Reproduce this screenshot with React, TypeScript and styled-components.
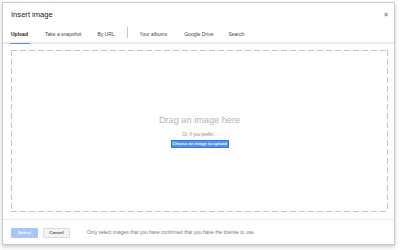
import React from "react";
import styled, { createGlobalStyle } from "styled-components";

const Global = createGlobalStyle`
  html, body { margin: 0; padding: 0; background: #fff; }
  body { font-family: "Liberation Sans", Arial, sans-serif; }
  #root { padding: 2px 5px 5px 2px; }
`;

const Dialog = styled.div`
  width: 391px;
  height: 241px;
  border: 1px solid #c8c8c8;
  box-shadow: 0 2px 4px rgba(0, 0, 0, 0.2);
  background: #fff;
  display: flex;
  flex-direction: column;
  box-sizing: content-box;
`;

const Header = styled.div`
  height: 21px;
  display: flex;
  align-items: center;
  justify-content: space-between;
  padding: 0 6px 0 8px;
`;

const Title = styled.div`
  font-size: 7.6px;
  color: #222;
  padding-top: 2px;
`;

const Close = styled.div`
  font-size: 7px;
  color: #777;
  font-weight: bold;
  padding-top: 1px;
`;

const Tabs = styled.div`
  height: 18px;
  display: flex;
  align-items: stretch;
  border-bottom: 2px solid #ececec;
  padding-left: 8px;
`;

const Tab = styled.div<{ $active?: boolean; $gap: number }>`
  font-size: 5px;
  color: ${(p) => (p.$active ? "#222" : "#444")};
  font-weight: ${(p) => (p.$active ? "bold" : "normal")};
  display: flex;
  align-items: center;
  padding: 1px 0 0 0;
  margin-right: ${(p) => p.$gap}px;
  border-bottom: 1px solid ${(p) => (p.$active ? "#4d90fe" : "transparent")};
  margin-bottom: -2px;
  box-sizing: border-box;
  ${(p) => (p.$active ? "padding-left: 1px; padding-right: 2px; margin-left: -1px;" : "")}
`;

const Separator = styled.div`
  width: 1px;
  background: #c6c6c6;
  margin: 3px 12px 4px 0;
`;

const Body = styled.div`
  flex: 1;
  padding: 6px 6px 7px 8px;
  display: flex;
`;

const Drop = styled.div`
  flex: 1;
  display: flex;
  flex-direction: column;
  align-items: center;
  justify-content: center;
  padding-bottom: 0;
  background-image: linear-gradient(to right, #c4c4c4 62%, transparent 62%),
    linear-gradient(to right, #c4c4c4 62%, transparent 62%),
    linear-gradient(to bottom, #c4c4c4 62%, transparent 62%),
    linear-gradient(to bottom, #c4c4c4 62%, transparent 62%);
  background-size: 9px 1px, 9px 1px, 1px 9px, 1px 9px;
  background-position: left top, left bottom, left top, right top;
  background-repeat: repeat-x, repeat-x, repeat-y, repeat-y;
`;

const DragText = styled.div`
  font-size: 9.2px;
  color: #b5b5b5;
  margin-bottom: 7px;
`;

const OrText = styled.div`
  font-size: 4.5px;
  color: #888;
  margin-bottom: 3px;
`;

const PrimaryButton = styled.div`
  width: 58px;
  height: 8px;
  background: #4d90fe;
  border: 1px solid #3079ed;
  box-sizing: border-box;
  color: #fff;
  font-size: 4.2px;
  font-weight: bold;
  display: flex;
  align-items: center;
  justify-content: center;
`;

const Footer = styled.div`
  height: 25px;
  border-top: 1px solid #ececec;
  display: flex;
  align-items: center;
  padding-left: 8px;
  padding-top: 1px;
  box-sizing: border-box;
`;

const Button = styled.div<{ $kind: "select" | "cancel" }>`
  width: 27px;
  height: 10px;
  box-sizing: border-box;
  border-radius: 1px;
  font-size: 4.4px;
  font-weight: bold;
  display: flex;
  align-items: center;
  justify-content: center;
  margin-right: ${(p) => (p.$kind === "select" ? 5 : 17)}px;
  background: ${(p) => (p.$kind === "select" ? "#a8c6f8" : "#f3f3f3")};
  border: 1px solid ${(p) => (p.$kind === "select" ? "#a8c6f8" : "#dcdcdc")};
  color: ${(p) => (p.$kind === "select" ? "#fff" : "#555")};
`;

const Note = styled.div`
  font-size: 4.95px;
  color: #777;
`;

export default function App() {
  return (
    <>
      <Global />
      <Dialog>
        <Header>
          <Title>Insert image</Title>
          <Close>×</Close>
        </Header>
        <Tabs>
          <Tab $active $gap={15}>Upload</Tab>
          <Tab $gap={16}>Take a snapshot</Tab>
          <Tab $gap={12}>By URL</Tab>
          <Separator />
          <Tab $gap={17}>Your albums</Tab>
          <Tab $gap={15}>Google Drive</Tab>
          <Tab $gap={0}>Search</Tab>
        </Tabs>
        <Body>
          <Drop>
            <DragText>Drag an image here</DragText>
            <OrText>Or, if you prefer...</OrText>
            <PrimaryButton>Choose an image to upload</PrimaryButton>
          </Drop>
        </Body>
        <Footer>
          <Button $kind="select">Select</Button>
          <Button $kind="cancel">Cancel</Button>
          <Note>Only select images that you have confirmed that you have the license to use.</Note>
        </Footer>
      </Dialog>
    </>
  );
}
